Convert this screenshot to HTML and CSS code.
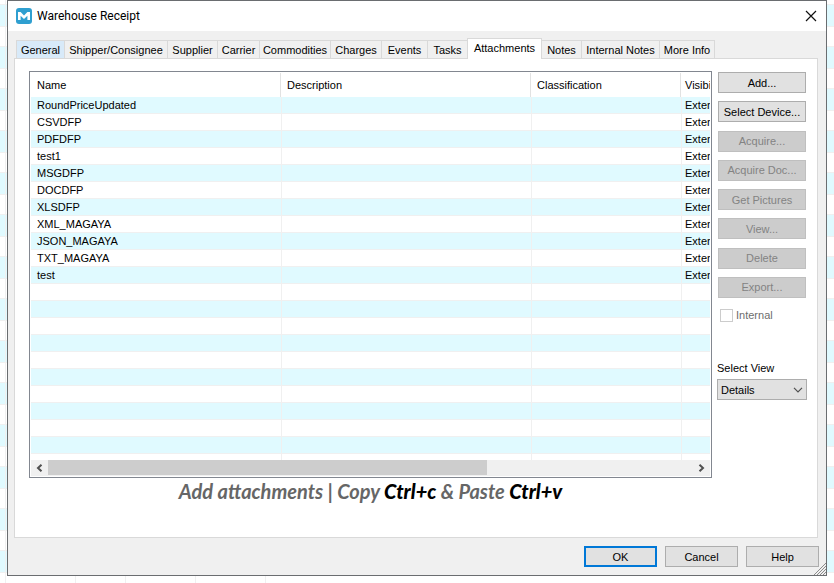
FILE: index.html
```html
<!DOCTYPE html>
<html lang="en">
<head>
<meta charset="utf-8">
<title>Warehouse Receipt</title>
<link rel="stylesheet" href="styles.css">
</head>
<body>
<main class="dialog">
  <header class="titlebar">
    <svg class="logo" viewBox="0 0 16 16" aria-hidden="true"><rect width="16" height="16" rx="3" fill="#2f9fd0"/><path d="M2 12V4h2.600L8 7.500 11.400 4H14v8h-2.600V7.800L8 11 4.600 7.800V12z" fill="#fff"/></svg>
    <h1 class="title">Warehouse Receipt</h1>
    <button class="close" type="button" aria-label="Close"><svg viewBox="0 0 12 12" width="12" height="12"><path d="M1 1l10 10M11 1L1 11" stroke="#111" stroke-width="1.2" fill="none"/></svg></button>
  </header>

  <nav class="tabs" role="tablist">
    <button class="tab hot" role="tab">General</button>
    <button class="tab" role="tab">Shipper/Consignee</button>
    <button class="tab" role="tab">Supplier</button>
    <button class="tab" role="tab">Carrier</button>
    <button class="tab" role="tab">Commodities</button>
    <button class="tab" role="tab">Charges</button>
    <button class="tab" role="tab">Events</button>
    <button class="tab" role="tab">Tasks</button>
    <button class="tab active" role="tab" aria-selected="true">Attachments</button>
    <button class="tab" role="tab">Notes</button>
    <button class="tab" role="tab">Internal Notes</button>
    <button class="tab" role="tab">More Info</button>
  </nav>

  <section class="panel">
    <div class="main">
      <div class="list">
        <div class="viewport">
          <table class="files">
            <colgroup><col class="c-name"><col class="c-desc"><col class="c-class"><col class="c-vis"></colgroup>
            <thead><tr><th>Name</th><th>Description</th><th>Classification</th><th>Visibi</th></tr></thead>
            <tbody>
              <tr><td>RoundPriceUpdated</td><td></td><td></td><td>Exter</td></tr>
              <tr><td>CSVDFP</td><td></td><td></td><td>Exter</td></tr>
              <tr><td>PDFDFP</td><td></td><td></td><td>Exter</td></tr>
              <tr><td>test1</td><td></td><td></td><td>Exter</td></tr>
              <tr><td>MSGDFP</td><td></td><td></td><td>Exter</td></tr>
              <tr><td>DOCDFP</td><td></td><td></td><td>Exter</td></tr>
              <tr><td>XLSDFP</td><td></td><td></td><td>Exter</td></tr>
              <tr><td>XML_MAGAYA</td><td></td><td></td><td>Exter</td></tr>
              <tr><td>JSON_MAGAYA</td><td></td><td></td><td>Exter</td></tr>
              <tr><td>TXT_MAGAYA</td><td></td><td></td><td>Exter</td></tr>
              <tr><td>test</td><td></td><td></td><td>Exter</td></tr>
              <tr><td></td><td></td><td></td><td></td></tr>
              <tr><td></td><td></td><td></td><td></td></tr>
              <tr><td></td><td></td><td></td><td></td></tr>
              <tr><td></td><td></td><td></td><td></td></tr>
              <tr><td></td><td></td><td></td><td></td></tr>
              <tr><td></td><td></td><td></td><td></td></tr>
              <tr><td></td><td></td><td></td><td></td></tr>
              <tr><td></td><td></td><td></td><td></td></tr>
              <tr><td></td><td></td><td></td><td></td></tr>
              <tr><td></td><td></td><td></td><td></td></tr>
              <tr><td></td><td></td><td></td><td></td></tr>
            </tbody>
          </table>
        </div>
        <div class="scrollbar">
          <button class="arrow" type="button" aria-label="Scroll left"><svg width="7" height="8" viewBox="0 0 7 8"><path d="M5.500 .7L2 4l3.500 3.300" fill="none" stroke="#505050" stroke-width="2"/></svg></button>
          <div class="track"><div class="thumb"></div></div>
          <button class="arrow" type="button" aria-label="Scroll right"><svg width="7" height="8" viewBox="0 0 7 8"><path d="M1.500 .7L5 4 1.500 7.300" fill="none" stroke="#505050" stroke-width="2"/></svg></button>
        </div>
      </div>
      <p class="caption">Add attachments | Copy <strong>Ctrl+c</strong> &amp; Paste <strong>Ctrl+v</strong></p>
    </div>

    <aside class="side">
      <div class="actions">
        <button class="btn" type="button">Add...</button>
        <button class="btn" type="button">Select Device...</button>
        <button class="btn" type="button" disabled>Acquire...</button>
        <button class="btn" type="button" disabled>Acquire Doc...</button>
        <button class="btn" type="button" disabled>Get Pictures</button>
        <button class="btn" type="button" disabled>View...</button>
        <button class="btn" type="button" disabled>Delete</button>
        <button class="btn" type="button" disabled>Export...</button>
      </div>
      <label class="check"><input type="checkbox" disabled>Internal</label>
      <label class="view-label" for="view">Select View</label>
      <div class="select">
        <select id="view"><option>Details</option></select>
        <svg class="chevron" width="10" height="6" viewBox="0 0 10 6" aria-hidden="true"><path d="M1 .8l4 4 4-4" fill="none" stroke="#505050" stroke-width="1.200"/></svg>
      </div>
    </aside>
  </section>

  <footer class="footer">
    <button class="btn default" type="button">OK</button>
    <button class="btn" type="button">Cancel</button>
    <button class="btn" type="button">Help</button>
  </footer>
  <svg class="grip" width="12" height="12" viewBox="0 0 12 12" aria-hidden="true"><path d="M0 12L12 0M3 12l9-9M6 12l6-6M9 12l3-3" stroke="#8c8c8c" fill="none"/></svg>
</main>
</body>
</html>
```
FILE: styles.css
```css
* { box-sizing: border-box; }

body {
  margin: 0;
  min-height: 100vh;
  padding: 0 7px 7px;
  display: flex;
  flex-direction: column;
  font: 11px/15px "Liberation Sans", Arial, sans-serif;
  color: #000;
  background:
    linear-gradient(#f0f0f0, #f0f0f0) 5px 0 / 1px 100% no-repeat,
    linear-gradient(#f0f0f0, #f0f0f0) 75px 0 / 1px 100% no-repeat,
    linear-gradient(#f0f0f0, #f0f0f0) 125px 0 / 1px 100% no-repeat,
    linear-gradient(#f0f0f0, #f0f0f0) 195px 0 / 1px 100% no-repeat,
    linear-gradient(#f0f0f0, #f0f0f0) 265px 0 / 1px 100% no-repeat,
    repeating-linear-gradient(#e0faff 0 21px, #f0f0f0 21px 22px, #fff 22px 41px, #f0f0f0 41px 42px) 0 5px / 100% 588px #fff;
}

button, select { font: inherit; color: inherit; }

.dialog {
  position: relative;
  flex: 1;
  display: flex;
  flex-direction: column;
  border: 1px solid #6a6d70;
  background: #f0f0f0;
}

.titlebar {
  display: flex;
  align-items: center;
  height: 30px;
  padding: 0 9px 0 8px;
  gap: 5px;
  background: #fff;
}
.logo { width: 16px; height: 16px; }
.title {
  margin: 0;
  flex: 1;
  font: 12px/16px Roboto, sans-serif;
}
.close {
  display: flex;
  padding: 0;
  border: 0;
  background: none;
}

.tabs {
  display: grid;
  grid-template-columns: 49px 103px 50px 42px 71px 51px 46px 40px 74px 40px 78px 55px;
  align-items: end;
  height: 27px;
  padding-left: 8px;
}
.tab {
  height: 18px;
  padding: 2px 0 0;
  border: 1px solid #d9d9d9;
  border-width: 1px 1px 0 0;
  background: #f0f0f0;
  white-space: nowrap;
}
.tab.hot { border-left-width: 1px; background: #d8eaf9; }
.tab.active {
  z-index: 1;
  height: 21px;
  margin: 0 0 -1px -1px;
  padding: 0 0 2px;
  border-left-width: 1px;
  background: #fff;
}

.panel {
  flex: 1;
  display: flex;
  gap: 5px;
  margin: 0 8px 0 6px;
  padding: 12px 10px 0 14px;
  border: 1px solid #d9d9d9;
  background: #fff;
}
.main { flex: 1; min-width: 0; }
.list {
  padding: 0 1px 1px;
  border: 1px solid #828790;
}
.viewport { height: 388px; overflow: hidden; }
.files {
  width: 100%;
  table-layout: fixed;
  border-collapse: separate;
  border-spacing: 0;
}
.c-name { width: 251px; }
.c-desc { width: 250px; }
.c-class { width: 150px; }
.files th, .files td {
  padding: 0 5px;
  text-align: left;
  font-weight: normal;
  white-space: nowrap;
}
.files th:first-child, .files td:first-child { padding-left: 6px; }
.files th:last-child, .files td:last-child { padding: 0 0 0 3px; border-right: 0; }
.files th {
  height: 25px;
  padding-top: 1px;
  background: linear-gradient(#e2e2e2, #e2e2e2) right 1px top 1px / 1px 100% no-repeat;
}
.files th:last-child { padding-top: 1px; background: none; }
.files td {
  height: 17px;
  line-height: 16px;
  border-right: 1px solid #f0f0f0;
  border-bottom: 1px solid #f0f0f0;
}
.files tbody tr:nth-child(odd) { background: #e0faff; }

.scrollbar { display: flex; height: 16px; background: #f0f0f0; }
.arrow {
  width: 17px;
  padding: 0;
  border: 0;
  display: flex;
  align-items: center;
  justify-content: center;
  background: none;
}
.track { flex: 1; }
.thumb { width: 68%; height: 15px; background: #cdcdcd; }

.caption {
  margin: 0;
  text-align: center;
  font: italic bold 20px/26px Lato, sans-serif;
  color: #666;
}
.caption strong { font-weight: 900; color: #000; }

.side { width: 90px; display: flex; flex-direction: column; }
.actions {
  display: flex;
  flex-direction: column;
  justify-content: space-between;
  height: 226px;
  margin: 1px 1px 0;
}
.btn {
  height: 21px;
  padding: 1px 0 0;
  border: 1px solid #adadad;
  background: #e1e1e1;
  white-space: nowrap;
}
.btn:disabled { border-color: #bfbfbf; background: #ccc; color: #838383; }

.check {
  display: flex;
  align-items: center;
  gap: 3px;
  margin: 10px 0 0 3px;
  color: #6d6d6d;
}
.check input {
  appearance: none;
  width: 13px;
  height: 13px;
  margin: 0;
  border: 1px solid #ccc;
  background: #fff;
}
.view-label { margin-top: 38px; }
.select { position: relative; margin-top: 3px; }
.select select {
  display: block;
  appearance: none;
  width: 100%;
  height: 21px;
  padding: 1px 3px 0;
  border: 1px solid #adadad;
  border-radius: 0;
  background: #e1e1e1;
}
.chevron { position: absolute; right: 4px; top: 8px; pointer-events: none; }

.footer {
  display: flex;
  justify-content: flex-end;
  gap: 8px;
  padding: 8px 7px;
}
.footer .btn { width: 73px; }
.btn.default { border: 2px solid #0078d7; }

.grip { position: absolute; right: 0; bottom: 0; }
```
